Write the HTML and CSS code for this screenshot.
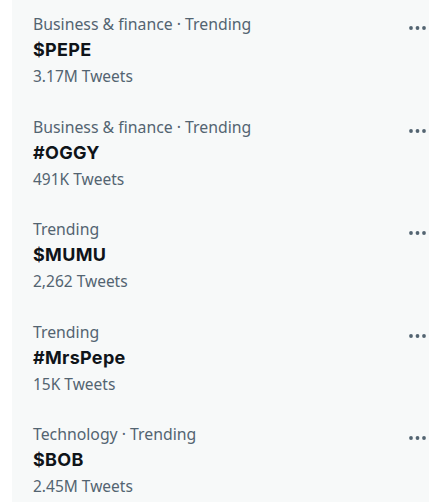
FILE: index.html
```html
<!DOCTYPE html>
<html>
<head>
<meta charset="utf-8">
<link rel="stylesheet" href="styles.css">
</head>
<body>
<div class="panel">
  <div class="trend">
    <div class="info">
      <div class="meta">Business &amp; finance · Trending</div>
      <div class="name">$PEPE</div>
      <div class="count">3.17M Tweets</div>
    </div>
    <svg class="more" viewBox="0 0 20 6" width="20" height="6"><circle cx="3" cy="3" r="1.9"/><circle cx="9.5" cy="3" r="1.9"/><circle cx="16" cy="3" r="1.9"/></svg>
  </div>
  <div class="trend">
    <div class="info">
      <div class="meta">Business &amp; finance · Trending</div>
      <div class="name">#OGGY</div>
      <div class="count">491K Tweets</div>
    </div>
    <svg class="more" viewBox="0 0 20 6" width="20" height="6"><circle cx="3" cy="3" r="1.9"/><circle cx="9.5" cy="3" r="1.9"/><circle cx="16" cy="3" r="1.9"/></svg>
  </div>
  <div class="trend">
    <div class="info">
      <div class="meta">Trending</div>
      <div class="name">$MUMU</div>
      <div class="count">2,262 Tweets</div>
    </div>
    <svg class="more" viewBox="0 0 20 6" width="20" height="6"><circle cx="3" cy="3" r="1.9"/><circle cx="9.5" cy="3" r="1.9"/><circle cx="16" cy="3" r="1.9"/></svg>
  </div>
  <div class="trend">
    <div class="info">
      <div class="meta">Trending</div>
      <div class="name">#MrsPepe</div>
      <div class="count">15K Tweets</div>
    </div>
    <svg class="more" viewBox="0 0 20 6" width="20" height="6"><circle cx="3" cy="3" r="1.9"/><circle cx="9.5" cy="3" r="1.9"/><circle cx="16" cy="3" r="1.9"/></svg>
  </div>
  <div class="trend">
    <div class="info">
      <div class="meta">Technology · Trending</div>
      <div class="name">$BOB</div>
      <div class="count">2.45M Tweets</div>
    </div>
    <svg class="more" viewBox="0 0 20 6" width="20" height="6"><circle cx="3" cy="3" r="1.9"/><circle cx="9.5" cy="3" r="1.9"/><circle cx="16" cy="3" r="1.9"/></svg>
  </div>
</div>
</body>
</html>
```
FILE: styles.css
```css
html, body {
  margin: 0;
  padding: 0;
  background: #ffffff;
}
body {
  font-family: "Noto Sans", "Liberation Sans", sans-serif;
  height: 502px;
  overflow: hidden;
}
.panel {
  margin-left: 12px;
  background: #f7f9f9;
  min-height: 502px;
}
.trend {
  display: flex;
  justify-content: space-between;
  align-items: flex-start;
  padding: 13px 0 15.5px 21px;
  height: 74px;
}
.meta, .count {
  color: #536471;
  font-size: 15.5px;
  line-height: 22px;
}
.meta {
  font-size: 15.8px;
}
.name {
  color: #0f1419;
  font-family: "Inter", "Noto Sans", sans-serif;
  font-weight: 700;
  font-size: 18px;
  letter-spacing: 0.3px;
  line-height: 26px;
  margin-top: 2px;
}
.count {
  margin-top: 2px;
}
.more {
  fill: #536471;
  margin-top: 12px;
  margin-right: 1px;
}
```
